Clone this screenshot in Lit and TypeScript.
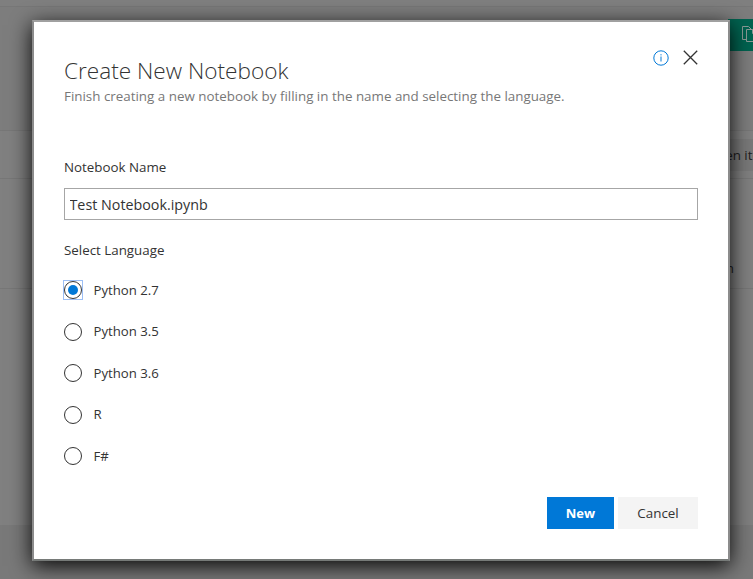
import { LitElement, html, css } from "lit";
import { customElement, state } from "lit/decorators.js";

@customElement("app-root")
class AppRoot extends LitElement {
  @state() selected = "Python 2.7";
  private languages = ["Python 2.7", "Python 3.5", "Python 3.6", "R", "F#"];

  static styles = css`
    :host {
      display: block;
      position: relative;
      width: 753px;
      height: 579px;
      overflow: hidden;
      font-family: "Open Sans", "Noto Sans", sans-serif;
      font-size: 13.35px;
      color: #333;
      background: #808080;
    }
    * { box-sizing: border-box; }
    .page { display: flex; flex-direction: column; height: 100%; color: #1e1e1e; }
    .row { border-bottom: 1px solid #777; flex: none; display: flex; justify-content: flex-end; align-items: flex-start; }
    .r1 { height: 7px; background: #7f7f7f; }
    .r2 { height: 124px; background: #7d7d7d; padding-top: 12px; }
    .r3 { height: 48px; padding-top: 8px; }
    .r4 { height: 110px; padding: 80px 19px 0 0; }
    .r5 { flex: 1; border-bottom: 0; }
    .r6 { height: 54px; background: #797979; border: 0; }
    .clone { width: 25px; height: 32px; background: #006350; overflow: hidden; padding: 7px 0 0 14px; }
    .clone svg { display: block; }
    .chip { width: 44px; height: 32px; background: #797979; overflow: hidden; line-height: 33px; white-space: nowrap; padding-left: 8px; }
    .overlay { position: absolute; inset: 0; padding: 20px 0 0 32px; }
    .dialog {
      width: 698px;
      height: 541px;
      border: 2px solid #8c8c8c;
      border-top-color: #a0a0a0;
      border-bottom-color: #767a78;
      background: #fff;
      box-shadow: 0 5px 20px rgba(0, 0, 0, 0.95);
      padding: 28px 30px 30px;
      display: flex;
      flex-direction: column;
    }
    .head { display: flex; justify-content: space-between; height: 82px; }
    .title { margin: 0; padding-top: 5px; font-size: 22.6px; line-height: 32px; font-weight: 300; white-space: nowrap; }
    .sub { font-size: 13.38px; line-height: 18px; color: #777; white-space: nowrap; }
    .tools { display: flex; gap: 14px; }
    .tools svg { display: block; }
    .label { line-height: 20px; height: 20px; }
    .name { margin-top: 25px; }
    .input { margin-top: 11px; height: 32px; border: 1px solid #a6a6a6; padding: 0 4.5px; font: inherit; font-size: 14.3px; color: #333; width: 100%; outline: 0; border-radius: 0; background: #fff; flex: none; }
    .lang { margin-top: 20px; }
    .options { display: flex; flex-direction: column; gap: 21.5px; margin-top: 20px; }
    .option { display: flex; align-items: center; gap: 11.5px; height: 20px; line-height: 20px; }
    .text { font-size: 13.2px; height: 21px; }
    .radio { width: 18px; height: 18px; border: 1px solid #333; border-radius: 50%; display: flex; align-items: center; justify-content: center; }
    .ring { width: 18px; height: 18px; }
    .on .ring { outline: 1px solid #9dbff5; }
    .on .radio::after { content: ""; width: 10px; height: 10px; border-radius: 50%; background: #0078d7; }
    .foot { display: flex; justify-content: flex-end; gap: 4px; margin-top: auto; }
    .btn { border: 0; height: 32px; padding: 0; font: inherit; font-size: 13.4px; color: #333; background: #f4f4f4; width: 80px; }
    .primary { background: #0078d7; color: #fff; width: 67px; font-size: 13px; font-weight: 700; }
  `;

  render() {
    return html`
      <div class="page">
        <div class="row r1"></div>
        <div class="row r2"><div class="clone">
          <svg width="18" height="18" viewBox="0 0 18 18" fill="none" stroke="#8a9b97"><path d="M4.5 13.5h-4v-13h6l3 3M4.5 3.5h6l4 4v8h-10zM10.5 3.5v4h4"/></svg>
        </div></div>
        <div class="row r3"><div class="chip">pen ite</div></div>
        <div class="row r4"><span>n</span></div>
        <div class="row r5"></div>
        <div class="row r6"></div>
      </div>
      <div class="overlay">
        <div class="dialog">
          <div class="head">
            <div>
              <h1 class="title">Create New Notebook</h1>
              <div class="sub">Finish creating a new notebook by filling in the name and selecting the language.</div>
            </div>
            <div class="tools">
              <svg width="16" height="16" viewBox="0 0 16 16" fill="none" stroke="#0078d7"><circle cx="8" cy="8" r="7.2"/><path d="M8 6.5v5M8 4.2v1.2"/></svg>
              <svg width="15" height="15" viewBox="0 0 15 15" stroke="#333" stroke-width="1.3"><path d="M.8 .8l13.4 13.4M14.2 .8L.8 14.2"/></svg>
            </div>
          </div>
          <div class="label name">Notebook Name</div>
          <input class="input" .value=${"Test Notebook.ipynb"} />
          <div class="label lang">Select Language</div>
          <div class="options">
            ${this.languages.map((l) => html`
              <div class="option ${l === this.selected ? "on" : ""}" @click=${() => (this.selected = l)}>
                <span class="ring"><span class="radio"></span></span><span class="text">${l}</span>
              </div>`)}
          </div>
          <div class="foot"><button class="btn primary">New</button><button class="btn">Cancel</button></div>
        </div>
      </div>`;
  }
}
